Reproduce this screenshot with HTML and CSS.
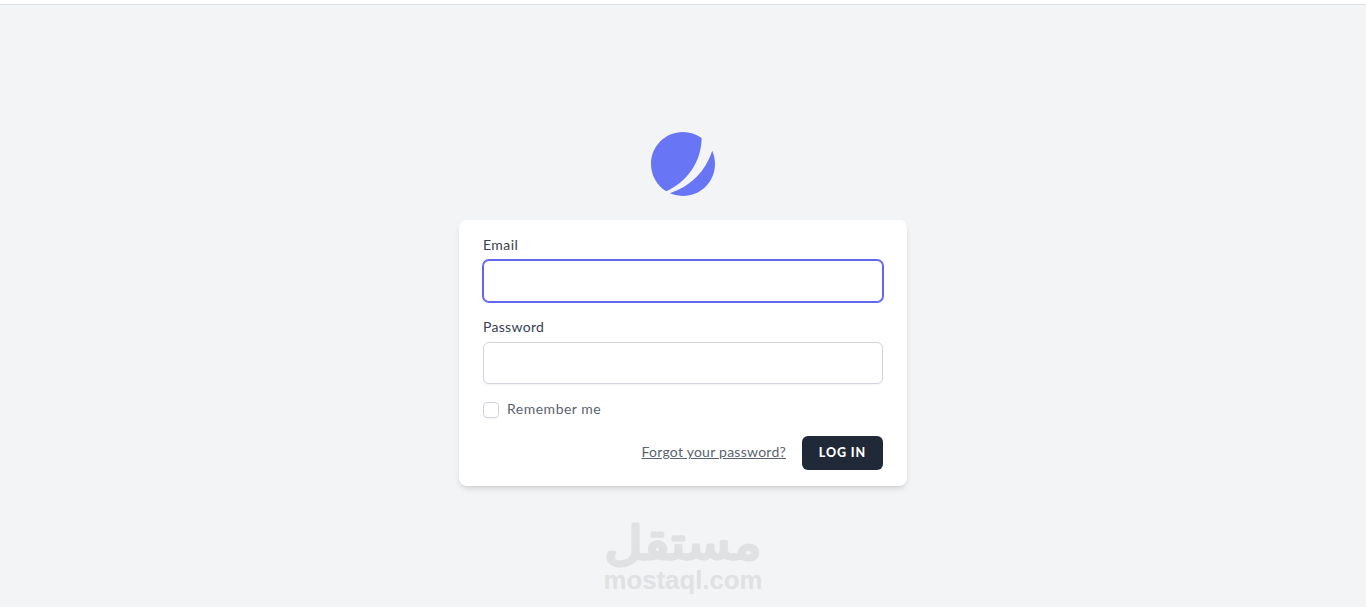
FILE: index.html
```html
<!DOCTYPE html>
<html lang="en">
<head>
    <meta charset="UTF-8">
    <meta name="viewport" content="width=device-width, initial-scale=1.0">
    <title>Log in</title>
    <link rel="stylesheet" href="styles.css">
</head>
<body>
    <div class="top-bar"></div>

    <main class="page">
        <a class="logo" href="#">
            <svg viewBox="0 0 48 48" fill="none">
                <path d="M11.395 44.428C4.557 40.198 0 32.632 0 24 0 10.745 10.745 0 24 0a23.891 23.891 0 0113.997 4.502c-.2 17.907-11.097 33.245-26.602 39.926z" fill="#6875F5"/>
                <path d="M14.134 45.885A23.914 23.914 0 0024 48c13.255 0 24-10.745 24-24 0-3.516-.756-6.856-2.115-9.866-4.659 15.143-16.608 27.092-31.75 31.751z" fill="#6875F5"/>
            </svg>
        </a>

        <form class="card">
            <div class="field">
                <label class="label label-email" for="email">Email</label>
                <input class="input focused" id="email" type="email">
            </div>

            <div class="field">
                <label class="label" for="password">Password</label>
                <input class="input" id="password" type="password">
            </div>

            <label class="remember">
                <input class="checkbox" type="checkbox">
                <span class="remember-text">Remember me</span>
            </label>

            <div class="actions">
                <a class="forgot" href="#">Forgot your password?</a>
                <button class="button" type="button">Log in</button>
            </div>
        </form>

        <svg class="watermark" viewBox="0 0 160 78">
            <text class="watermark-ar" x="80" y="39" textLength="157" lengthAdjust="spacingAndGlyphs" direction="rtl">مستقل</text>
            <text class="watermark-en" x="80" y="69" textLength="159" lengthAdjust="spacingAndGlyphs">mostaql.com</text>
        </svg>
    </main>
</body>
</html>
```
FILE: styles.css
```css
* {
    margin: 0;
    padding: 0;
    box-sizing: border-box;
}

body {
    height: 100vh;
    overflow: hidden;
    display: flex;
    flex-direction: column;
    font-family: Lato, 'Liberation Sans', sans-serif;
    font-size: 14px;
    line-height: 18px;
    background: #f3f4f6;
}

.top-bar {
    height: 5px;
    flex-shrink: 0;
    background: white;
    border-bottom: 1px solid #dedfe1;
}

.page {
    display: flex;
    flex-direction: column;
    align-items: center;
    padding-top: 127px;
}

.logo svg {
    display: block;
    width: 64px;
    height: 64px;
}

.card {
    width: 448px;
    margin-top: 24px;
    padding: 16px 24px;
    background: white;
    border-radius: 8px;
    box-shadow: 0 4px 6px -1px rgba(0, 0, 0, 0.1), 0 2px 4px -2px rgba(0, 0, 0, 0.1);
}

.field {
    margin-bottom: 16px;
}

.label {
    display: block;
    padding-bottom: 2px;
    margin-bottom: 4px;
    color: #374151;
    font-weight: 400;
    letter-spacing: 0.3px;
}

.label-email {
    letter-spacing: 0.45px;
}

.input {
    display: block;
    width: 100%;
    height: 42px;
    padding: 8px 12px;
    border: 1px solid #d1d5db;
    border-radius: 6px;
    background: white;
    box-shadow: 0 1px 2px rgba(0, 0, 0, 0.05);
    outline: none;
}

.input.focused {
    border-color: #6366f1;
    box-shadow: 0 0 0 1px #6366f1;
}

.remember {
    display: flex;
    align-items: center;
    gap: 8px;
    color: #5b6370;
    letter-spacing: 0.5px;
}

.remember-text {
    padding-bottom: 2px;
}

.checkbox {
    appearance: none;
    width: 16px;
    height: 16px;
    border: 1px solid #d1d5db;
    border-radius: 4px;
    box-shadow: 0 1px 2px rgba(0, 0, 0, 0.05);
}

.actions {
    display: flex;
    justify-content: flex-end;
    align-items: center;
    gap: 16px;
    margin-top: 16px;
}

.forgot {
    padding-bottom: 2px;
    color: #5b6370;
    letter-spacing: 0.25px;
}

.button {
    width: 81px;
    height: 34px;
    padding-bottom: 2px;
    border: none;
    border-radius: 6px;
    background: #1f2937;
    color: white;
    font-family: inherit;
    font-size: 12.5px;
    font-weight: 900;
    letter-spacing: 0.9px;
    text-transform: uppercase;
}

.watermark {
    width: 160px;
    height: 78px;
    margin-top: 34px;
    overflow: visible;
    fill: #e0e1e3;
    text-anchor: middle;
}

.watermark-ar {
    font: 46px 'DejaVu Sans', sans-serif;
    stroke: #e0e1e3;
    stroke-width: 3px;
    stroke-linejoin: round;
}

.watermark-en {
    font: bold 26px 'Liberation Sans', sans-serif;
}
```
